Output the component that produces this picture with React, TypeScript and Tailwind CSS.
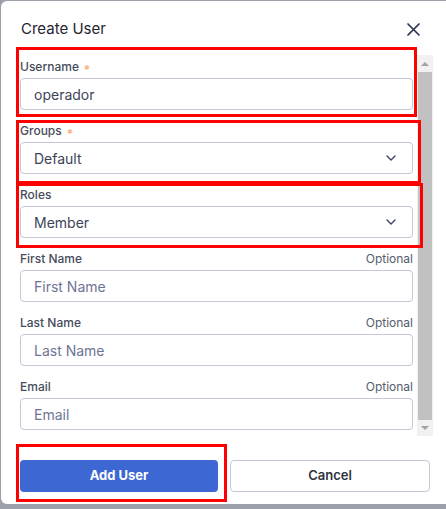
import React from "react";

function Chevron() {
  return (
    <svg width="10" height="6" viewBox="0 0 10 6" fill="none">
      <path d="M1 1l4 4 4-4" stroke="#3d4466" strokeWidth="1.4" strokeLinecap="round" strokeLinejoin="round" />
    </svg>
  );
}

function Label({ text, required, optional }: { text: string; required?: boolean; optional?: boolean }) {
  return (
    <div className="flex h-[16px] items-center justify-between text-[12px] leading-[16px]">
      <div className="flex items-center font-medium text-[#474c5c]">
        <span>{text}</span>
        {required && <span className="ml-[5px] text-[7px] text-[#f9b58c] leading-none">✱</span>}
      </div>
      {optional && <span className="text-[#555b6d]">Optional</span>}
    </div>
  );
}

function Field({
  label,
  required,
  optional,
  value,
  placeholder,
  select,
}: {
  label: string;
  required?: boolean;
  optional?: boolean;
  value?: string;
  placeholder?: string;
  select?: boolean;
}) {
  return (
    <div className="flex flex-col gap-[3px]">
      <Label text={label} required={required} optional={optional} />
      <div className="flex h-[32px] items-center justify-between rounded-[4px] border border-[#c3c8d6] bg-white pl-[13px] pr-[16px] text-[14px]">
        {value ? (
          <span className="text-[#3d4459]">{value}</span>
        ) : (
          <span className="text-[#6e7594]">{placeholder}</span>
        )}
        {select && <Chevron />}
      </div>
    </div>
  );
}

function Scrollbar() {
  return (
    <div className="flex w-[16px] flex-col bg-[#f1f1f1]">
      <div className="flex h-[17px] items-center justify-center">
        <div className="h-0 w-0 border-x-[4px] border-b-[4px] border-x-transparent border-b-[#a3a3a3]" />
      </div>
      <div className="mx-[1px] flex-1 bg-[#c1c1c1]" />
      <div className="flex h-[16px] items-center justify-center">
        <div className="h-0 w-0 border-x-[4px] border-t-[4px] border-x-transparent border-t-[#a3a3a3]" />
      </div>
    </div>
  );
}

export default function App() {
  return (
    <div
      className="relative h-[509px] w-[446px] overflow-hidden bg-[#9ca1a9] pl-[1px] pt-[1px]"
      style={{ fontFamily: "Inter, 'Noto Sans', sans-serif" }}
    >
      <div className="flex h-[503px] w-[460px] flex-col rounded-[6px] bg-white">
        <div className="flex h-[54px] w-[432px] items-center justify-between pl-[20px] pr-[13px] pt-[3px]">
          <span className="text-[15px] font-normal text-[#1f2430]">Create User</span>
          <svg width="13" height="13" viewBox="0 0 13 13" fill="none">
            <path d="M1 1l11 11M12 1L1 12" stroke="#2d3250" strokeWidth="1.7" strokeLinecap="round" />
          </svg>
        </div>
        <div className="flex h-[381px] w-[432px] gap-[4px] pl-[19px]">
          <div className="flex w-[393px] flex-col gap-[13px] overflow-hidden pt-[4px]">
            <Field label="Username" required value="operador" />
            <Field label="Groups" required value="Default" select />
            <Field label="Roles" value="Member" select />
            <Field label="First Name" optional placeholder="First Name" />
            <Field label="Last Name" optional placeholder="Last Name" />
            <Field label="Email" optional placeholder="Email" />
          </div>
          <Scrollbar />
        </div>
        <div className="flex w-[429px] gap-[12px] pl-[19px] pt-[24px]">
          <button className="flex h-[32px] flex-1 items-center justify-center rounded-[4px] bg-[#3d67d3] text-[13px] font-bold text-white">
            Add User
          </button>
          <button className="flex h-[32px] flex-1 items-center justify-center rounded-[4px] border border-[#c3c8d6] bg-white text-[13px] font-semibold text-[#2d3340]">
            Cancel
          </button>
        </div>
      </div>

      <div className="pointer-events-none absolute left-[16px] top-[47px] h-[70px] w-[401px] border-[3px] border-[#ff0000]" />
      <div className="pointer-events-none absolute left-[16px] top-[120px] h-[64px] w-[405px] border-[3px] border-[#ff0000]" />
      <div className="pointer-events-none absolute left-[16px] top-[183px] h-[65px] w-[407px] border-[3px] border-[#ff0000]" />
      <div className="pointer-events-none absolute left-[16px] top-[444px] h-[58px] w-[211px] border-[3px] border-[#ff0000]" />
    </div>
  );
}
